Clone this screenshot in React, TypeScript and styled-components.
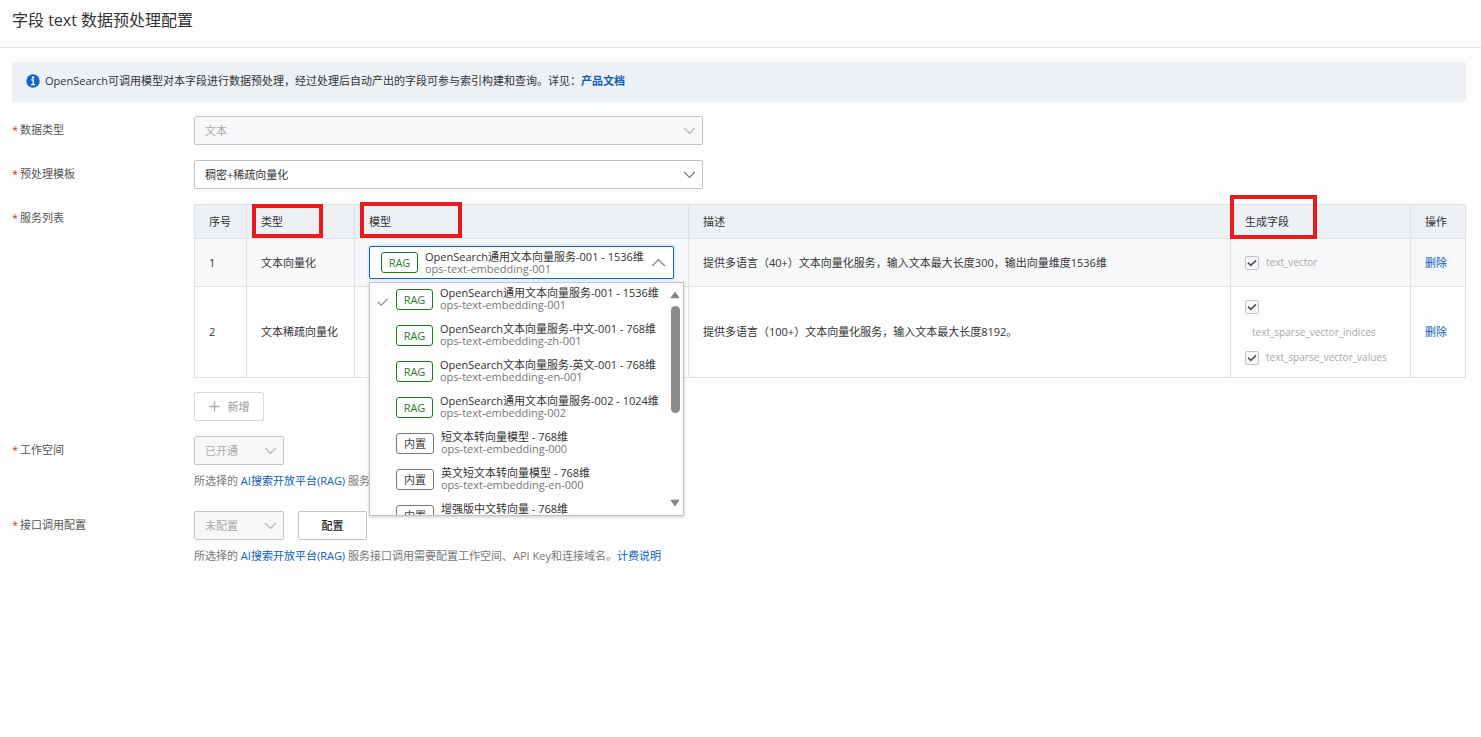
import React from "react";
import styled, { createGlobalStyle, css } from "styled-components";

const GlobalStyle = createGlobalStyle`
  * { box-sizing: border-box; }
  body {
    margin: 0;
    background: #fdfdfd;
    color: #333;
    font-family: "Open Sans", "Noto Sans CJK SC", sans-serif;
    font-size: 11px;
    line-height: 18px;
  }
  button, select, input { font: inherit; margin: 0; }
`;

const Header = styled.header`
  height: 48px;
  padding: 0 12px 7px;
  display: flex;
  align-items: center;
  border-bottom: 1px solid #e3e3e3;
`;

const Title = styled.h1`
  margin: 0;
  font-size: 16px;
  line-height: 24px;
  font-weight: 400;
`;

const Main = styled.main`
  padding: 14px 15px 14px 12px;
`;

const Notice = styled.div`
  display: flex;
  align-items: center;
  height: 40px;
  margin-bottom: 14px;
  padding: 0 14px 3px;
  background: #edf0f5;
  border-radius: 2px;
  p { margin: 0 0 0 5px; }
`;

const Link = styled.a<{ $strong?: boolean }>`
  color: #0f5fb8;
  text-decoration: none;
  font-weight: ${(p) => (p.$strong ? 700 : 400)};
`;

const Form = styled.form`
  display: flex;
  flex-direction: column;
  gap: 15px;
`;

const FormRow = styled.div`
  display: grid;
  grid-template-columns: 182px minmax(0, 1fr);
`;

const FieldLabel = styled.label`
  height: 28px;
  line-height: 28px;
  color: #555;
  &::before {
    content: "*";
    color: #c23a3a;
    margin-right: 2px;
  }
`;

const Controls = styled.div`
  display: flex;
  gap: 14px;
`;

const SelectBox = styled.div<{ $width: number }>`
  position: relative;
  width: ${(p) => p.$width}px;
  height: 29px;
  svg {
    position: absolute;
    right: 7px;
    top: 8px;
    pointer-events: none;
  }
`;

const Select = styled.select`
  appearance: none;
  width: 100%;
  height: 100%;
  padding: 0 28px 0 10px;
  border: 1px solid #c0c3cc;
  border-radius: 2px;
  background: #fff;
  color: #333;
  opacity: 1;
  &:disabled { background: #f7f8fa; color: #aaa; }
`;

const Button = styled.button<{ $width: number }>`
  display: flex;
  align-items: center;
  justify-content: center;
  gap: 8px;
  width: ${(p) => p.$width}px;
  height: 29px;
  padding: 0;
  border: 1px solid #c0c3cc;
  border-radius: 2px;
  background: #fff;
  color: #222;
  font-weight: 500;
  &:disabled { border-color: #d5d8dc; color: #aaa; }
`;

const Hint = styled.p`
  margin: 0;
  padding: 7px 0 6px;
  color: #777;
`;

const Table = styled.table`
  width: 100%;
  table-layout: fixed;
  border-collapse: collapse;
  margin-bottom: 14px;
`;

const Col = styled.col<{ $width?: number }>`
  ${(p) => p.$width && css`width: ${p.$width}px;`}
`;

const Th = styled.th`
  position: relative;
  height: 34px;
  padding: 0 14px;
  border: 1px solid #dfe1e4;
  background: #edf0f5;
  font-weight: 400;
  text-align: left;
`;

const Tr = styled.tr<{ $striped?: boolean; $height: number }>`
  height: ${(p) => p.$height}px;
  background: ${(p) => (p.$striped ? "#f7f8fa" : "#fdfdfd")};
`;

const Td = styled.td`
  padding: 0 14px;
  border: 1px solid #dfe1e4;
`;

const Mark = styled.span<{ $top: number; $left: number; $width: number; $height: number }>`
  position: absolute;
  top: ${(p) => p.$top}px;
  left: ${(p) => p.$left}px;
  width: ${(p) => p.$width}px;
  height: ${(p) => p.$height}px;
  border: 4px solid #e81b1b;
  pointer-events: none;
`;

const Picker = styled.div`
  position: relative;
  width: 305px;
`;

const PickerButton = styled.button`
  display: flex;
  align-items: center;
  gap: 7px;
  width: 100%;
  height: 33px;
  padding: 0 9px 0 11px;
  border: 1px solid #1466ab;
  border-radius: 2px;
  box-shadow: 0 0 0 2px rgba(0, 112, 204, 0.08);
  background: #fff;
  color: #333;
  text-align: left;
  > svg { flex: none; margin-left: auto; }
`;

const Popup = styled.div`
  position: absolute;
  z-index: 2;
  top: 36px;
  left: 0;
  display: flex;
  width: 315px;
  height: 234px;
  background: #fdfdfd;
  border: 1px solid #c0c3cc;
  box-shadow: 0 1px 3px rgba(0, 0, 0, 0.2);
`;

const Options = styled.ul`
  flex: 1;
  margin: 0;
  padding: 0;
  list-style: none;
  overflow-y: auto;
  scrollbar-width: none;
`;

const Option = styled.li`
  display: grid;
  grid-template-columns: 19px auto 1fr;
  column-gap: 7px;
  align-items: center;
  height: 36px;
  padding: 0 0 4px;
  > svg { justify-self: end; margin-top: 5px; }
`;

const Tag = styled.span<{ $builtIn?: boolean }>`
  flex: none;
  grid-column: 2;
  min-width: 37px;
  height: 21px;
  padding: 0 ${(p) => (p.$builtIn ? 7 : 6)}px;
  border: 1px solid ${(p) => (p.$builtIn ? "#777" : "#1e7a1e")};
  border-radius: 3px;
  color: ${(p) => (p.$builtIn ? "#444" : "#2c7a2c")};
  line-height: 20px;
  text-align: center;
`;

const ModelText = styled.span`
  display: flex;
  flex-direction: column;
  line-height: 12px;
  white-space: nowrap;
  small { min-height: 12px; font-size: 11px; color: #777; }
`;

const Scrollbar = styled.div`
  display: flex;
  flex-direction: column;
  align-items: center;
  width: 16px;
  padding: 8px 0;
`;

const Thumb = styled.div`
  width: 9px;
  height: 107px;
  margin: 7px 0 auto;
  border-radius: 5px;
  background: #8b8b8b;
`;

const FieldList = styled.div`
  display: grid;
  font-size: 10px;
  line-height: 25px;
`;

const CheckLabel = styled.label`
  color: #aaa;
`;

const CheckText = styled.span`
  display: inline-block;
  margin: 0 7px;
  vertical-align: middle;
`;

const CheckBox = styled.span`
  position: relative;
  display: inline-block;
  width: 14px;
  height: 14px;
  vertical-align: middle;
  input {
    appearance: none;
    display: block;
    width: 14px;
    height: 14px;
    border: 1px solid #c0c3cc;
    border-radius: 2px;
    background: #f7f8fa;
  }
  svg { position: absolute; top: 2px; left: 2px; }
`;

const Chevron = ({ color = "#888", up = false, size = 13 }: { color?: string; up?: boolean; size?: number }) => (
  <svg width={size} height={size} viewBox="0 0 13 13" fill="none" stroke={color} strokeWidth="1.2">
    <path d={up ? "M1 9.5 6.5 4 12 9.5" : "M1.2 4 6.5 9.3 11.8 4"} />
  </svg>
);

const InfoIcon = () => (
  <svg width="14" height="14" viewBox="0 0 14 14">
    <circle cx="7" cy="7" r="6.7" fill="#1166c4" />
    <circle cx="7" cy="3.4" r="1.2" fill="#fff" />
    <path d="M5.2 5.9h2v4.4M4.9 10.6h4.2" stroke="#fff" strokeWidth="1.3" fill="none" />
  </svg>
);

const PlusIcon = () => (
  <svg width="11" height="11" viewBox="0 0 11 11" stroke="#aaa" strokeWidth="1.3">
    <path d="M5.5 0.5v10M0.5 5.5h10" />
  </svg>
);

const TickIcon = () => (
  <svg width="12" height="10" viewBox="0 0 12 10" fill="none" stroke="#888" strokeWidth="1.1">
    <path d="M1 5 4.2 8.2 10.8 1.8" />
  </svg>
);

const Arrow = ({ down = false }: { down?: boolean }) => (
  <svg width="10" height="8" viewBox="0 0 10 8" fill="#858585" stroke="#858585" strokeLinejoin="round">
    <path d={down ? "M1 1.2h8L5 6.8z" : "M1 6.8h8L5 1.2z"} />
  </svg>
);

const CheckedField = ({ name }: { name: string }) => (
  <CheckLabel>
    <CheckBox>
      <input type="checkbox" defaultChecked disabled />
      <svg width="10" height="10" viewBox="0 0 10 10" fill="none" stroke="#555" strokeWidth="1.7">
        <path d="M1 4.6 3.8 7.4 9 2.4" />
      </svg>
    </CheckBox>
    <CheckText>{name}</CheckText>
  </CheckLabel>
);

const DropDown = ({ id, value, width, disabled }: { id: string; value: string; width: number; disabled?: boolean }) => (
  <SelectBox $width={width}>
    <Select id={id} disabled={disabled} defaultValue={value}>
      <option>{value}</option>
    </Select>
    <Chevron color={disabled ? "#b5b5b5" : "#777"} />
  </SelectBox>
);

const models = [
  { name: "OpenSearch通用文本向量服务-001 - 1536维", id: "ops-text-embedding-001" },
  { name: "OpenSearch文本向量服务-中文-001 - 768维", id: "ops-text-embedding-zh-001" },
  { name: "OpenSearch文本向量服务-英文-001 - 768维", id: "ops-text-embedding-en-001" },
  { name: "OpenSearch通用文本向量服务-002 - 1024维", id: "ops-text-embedding-002" },
  { name: "短文本转向量模型 - 768维", id: "ops-text-embedding-000", builtIn: true },
  { name: "英文短文本转向量模型 - 768维", id: "ops-text-embedding-en-000", builtIn: true },
  { name: "增强版中文转向量 - 768维", id: "", builtIn: true },
];

const ModelPicker = () => (
  <Picker>
    <PickerButton type="button" aria-haspopup="listbox" aria-expanded="true">
      <Tag>RAG</Tag>
      <ModelText>
        {models[0].name}
        <small>{models[0].id}</small>
      </ModelText>
      <Chevron up size={15} />
    </PickerButton>
    <Popup>
      <Options role="listbox" aria-label="模型">
        {models.map((m, i) => (
          <Option key={m.name} role="option" aria-selected={i === 0}>
            {i === 0 && <TickIcon />}
            <Tag $builtIn={m.builtIn}>{m.builtIn ? "内置" : "RAG"}</Tag>
            <ModelText>
              {m.name}
              <small>{m.id}</small>
            </ModelText>
          </Option>
        ))}
      </Options>
      <Scrollbar aria-hidden="true">
        <Arrow />
        <Thumb />
        <Arrow down />
      </Scrollbar>
    </Popup>
  </Picker>
);

export default function App() {
  return (
    <>
      <GlobalStyle />
      <Header>
        <Title>字段 text 数据预处理配置</Title>
      </Header>
      <Main>
        <Notice>
          <InfoIcon />
          <p>
            OpenSearch可调用模型对本字段进行数据预处理，经过处理后自动产出的字段可参与索引构建和查询。详见：
            <Link href="#docs" $strong>产品文档</Link>
          </p>
        </Notice>
        <Form>
          <FormRow>
            <FieldLabel htmlFor="data-type">数据类型</FieldLabel>
            <DropDown id="data-type" value="文本" width={509} disabled />
          </FormRow>
          <FormRow>
            <FieldLabel htmlFor="template">预处理模板</FieldLabel>
            <DropDown id="template" value="稠密+稀疏向量化" width={509} />
          </FormRow>
          <FormRow>
            <FieldLabel as="span">服务列表</FieldLabel>
            <div>
              <Table>
                <colgroup>
                  <Col $width={52} />
                  <Col $width={108} />
                  <Col $width={334} />
                  <Col />
                  <Col $width={180} />
                  <Col $width={55} />
                </colgroup>
                <thead>
                  <tr>
                    <Th>序号</Th>
                    <Th>类型<Mark $top={-1} $left={5} $width={71} $height={34} /></Th>
                    <Th>模型<Mark $top={-3} $left={5} $width={102} $height={36} /></Th>
                    <Th>描述</Th>
                    <Th>生成字段<Mark $top={-10} $left={-1} $width={87} $height={44} /></Th>
                    <Th>操作</Th>
                  </tr>
                </thead>
                <tbody>
                  <Tr $striped $height={48}>
                    <Td>1</Td>
                    <Td>文本向量化</Td>
                    <Td><ModelPicker /></Td>
                    <Td>提供多语言（40+）文本向量化服务，输入文本最大长度300，输出向量维度1536维</Td>
                    <Td>
                      <FieldList>
                        <CheckedField name="text_vector" />
                      </FieldList>
                    </Td>
                    <Td><Link href="#delete-1">删除</Link></Td>
                  </Tr>
                  <Tr $height={91}>
                    <Td>2</Td>
                    <Td>文本稀疏向量化</Td>
                    <Td />
                    <Td>提供多语言（100+）文本向量化服务，输入文本最大长度8192。</Td>
                    <Td>
                      <FieldList>
                        <CheckedField name="text_sparse_vector_indices" />
                        <CheckedField name="text_sparse_vector_values" />
                      </FieldList>
                    </Td>
                    <Td><Link href="#delete-2">删除</Link></Td>
                  </Tr>
                </tbody>
              </Table>
              <Button type="button" $width={70} disabled><PlusIcon />新增</Button>
            </div>
          </FormRow>
          <FormRow>
            <FieldLabel htmlFor="workspace">工作空间</FieldLabel>
            <div>
              <DropDown id="workspace" value="已开通" width={90} disabled />
              <Hint>所选择的 <Link href="#platform">AI搜索开放平台(RAG)</Link> 服务需</Hint>
            </div>
          </FormRow>
          <FormRow>
            <FieldLabel htmlFor="api-config">接口调用配置</FieldLabel>
            <div>
              <Controls>
                <DropDown id="api-config" value="未配置" width={90} disabled />
                <Button type="button" $width={69}>配置</Button>
              </Controls>
              <Hint>
                所选择的 <Link href="#platform">AI搜索开放平台(RAG)</Link> 服务接口调用需要配置工作空间、API Key和连接域名。<Link href="#billing">计费说明</Link>
              </Hint>
            </div>
          </FormRow>
        </Form>
      </Main>
    </>
  );
}
